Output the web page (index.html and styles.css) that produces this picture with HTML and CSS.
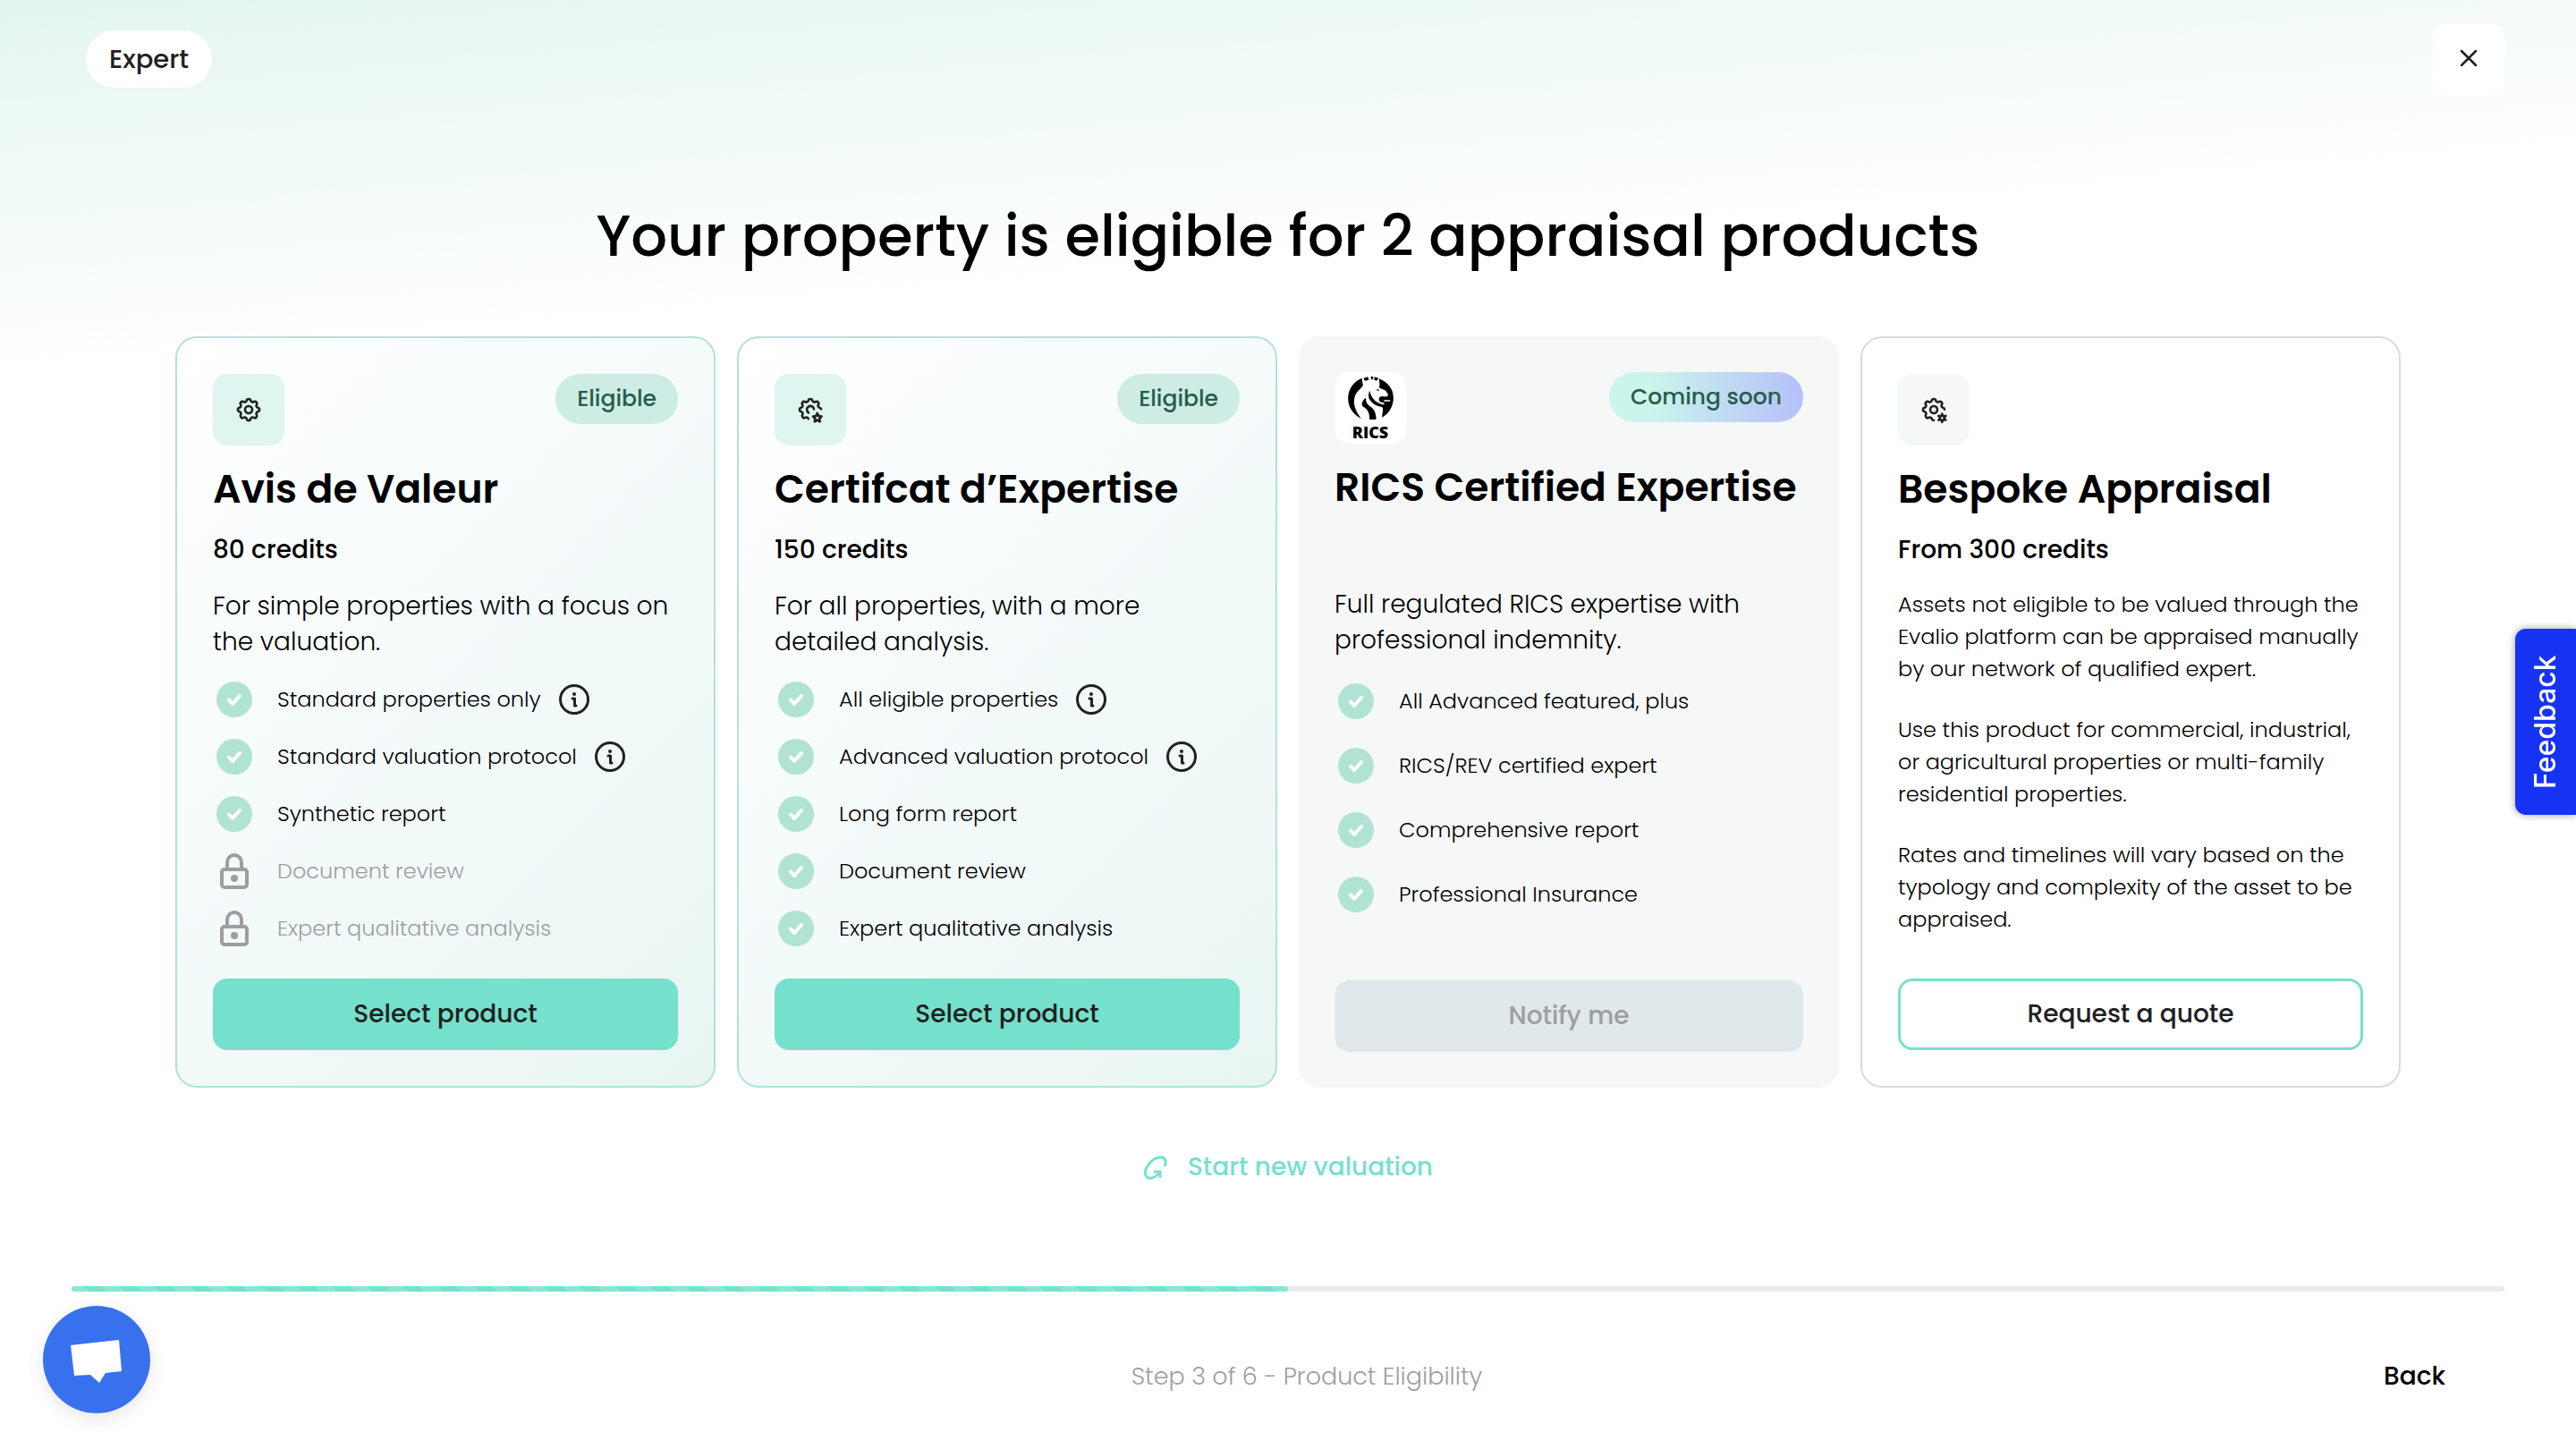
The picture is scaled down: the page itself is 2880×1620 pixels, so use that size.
FILE: index.html
```html
<!DOCTYPE html>
<html lang="en">
<head>
    <meta charset="UTF-8">
    <meta name="viewport" content="width=device-width, initial-scale=1.0">
    <title>Product Eligibility</title>
    <link rel="stylesheet" href="styles.css">
</head>
<body>
    <!-- Shared icons -->
    <svg class="sprite" width="0" height="0" aria-hidden="true">
        <symbol id="check" viewBox="0 0 40 40">
            <circle cx="20" cy="20" r="20" fill="#b1e3d5"/>
            <path d="M14 20.500l4 4.500 8-9" fill="none" stroke="#fff" stroke-width="4" stroke-linecap="round" stroke-linejoin="round"/>
        </symbol>
        <symbol id="lock" viewBox="0 0 40 40">
            <path d="M12 17V10a8 8 0 0 1 16 0v7" fill="none" stroke="#9e9e9e" stroke-width="4"/>
            <rect x="6" y="18" width="28" height="20" rx="3" fill="none" stroke="#9e9e9e" stroke-width="4"/>
            <circle cx="20" cy="28" r="4" fill="#9e9e9e"/>
        </symbol>
        <symbol id="info" viewBox="0 0 34 34">
            <circle cx="17" cy="17" r="15.500" fill="none" stroke="#212121" stroke-width="3"/>
            <circle cx="17" cy="11" r="2" fill="#212121"/>
            <path d="M15 16h2.500v8h1.500" fill="none" stroke="#212121" stroke-width="3" stroke-linecap="round" stroke-linejoin="round"/>
        </symbol>
    </svg>

    <header class="topbar">
        <span class="mode">Expert</span>
        <button class="close" aria-label="Close">
            <svg width="20" height="20" viewBox="0 0 20 20"><path d="M2 2l16 16M18 2L2 18" stroke="#212121" stroke-width="2.500" stroke-linecap="round"/></svg>
        </button>
    </header>

    <main>
        <h1>Your property is eligible for 2 appraisal products</h1>

        <div class="cards">
            <section class="card eligible">
                <div class="card-top">
                    <span class="icon">
                        <svg width="32" height="32" viewBox="0 0 24 24"><path d="M10.300 4.300c.4-1.750 3-1.750 3.400 0a1.700 1.700 0 0 0 2.600 1.100c1.500-.95 3.300.85 2.400 2.400a1.700 1.700 0 0 0 1 2.500c1.800.5 1.800 3 0 3.400a1.700 1.700 0 0 0-1 2.600c.9 1.500-.9 3.300-2.400 2.400a1.700 1.700 0 0 0-2.600 1c-.4 1.800-3 1.800-3.400 0a1.700 1.700 0 0 0-2.600-1c-1.500.9-3.300-.9-2.400-2.400a1.700 1.700 0 0 0-1-2.600c-1.800-.4-1.800-2.900 0-3.400a1.700 1.700 0 0 0 1-2.500c-.9-1.550.9-3.350 2.400-2.400a1.700 1.700 0 0 0 2.600-1.100z"/><circle cx="12" cy="12" r="3"/></svg>
                    </span>
                    <span class="badge">Eligible</span>
                </div>
                <h2>Avis de Valeur</h2>
                <p class="price">80 credits</p>
                <p class="intro">For simple properties with a focus on the valuation.</p>
                <ul>
                    <li><svg class="mark"><use href="#check"/></svg>Standard properties only <svg class="info"><use href="#info"/></svg></li>
                    <li><svg class="mark"><use href="#check"/></svg>Standard valuation protocol <svg class="info"><use href="#info"/></svg></li>
                    <li><svg class="mark"><use href="#check"/></svg>Synthetic report</li>
                    <li class="locked"><svg class="mark"><use href="#lock"/></svg>Document review</li>
                    <li class="locked"><svg class="mark"><use href="#lock"/></svg>Expert qualitative analysis</li>
                </ul>
                <button class="btn">Select product</button>
            </section>

            <section class="card eligible">
                <div class="card-top">
                    <span class="icon">
                        <svg width="32" height="32" viewBox="0 0 24 24"><path d="M10.300 19.700a1.700 1.700 0 0 0-2.600-1c-1.500.9-3.300-.9-2.400-2.400a1.700 1.700 0 0 0-1-2.600c-1.800-.4-1.800-2.900 0-3.400a1.700 1.700 0 0 0 1-2.500c-.9-1.550.9-3.350 2.400-2.400a1.700 1.700 0 0 0 2.600-1.100c.4-1.750 3-1.750 3.400 0a1.700 1.700 0 0 0 2.600 1.100c1.500-.95 3.300.85 2.400 2.400a1.700 1.700 0 0 0 1 2.500c.7.200 1.100.6 1.300 1.200M15 11.500a3 3 0 1 0-4.500 3"/><path d="M17.800 20.800l-2.200 1.200.4-2.500-1.800-1.800 2.500-.4 1.100-2.300 1.100 2.300 2.500.4-1.800 1.800.4 2.500z"/></svg>
                    </span>
                    <span class="badge">Eligible</span>
                </div>
                <h2>Certifcat d’Expertise</h2>
                <p class="price">150 credits</p>
                <p class="intro">For all properties, with a more detailed analysis.</p>
                <ul>
                    <li><svg class="mark"><use href="#check"/></svg>All eligible properties <svg class="info"><use href="#info"/></svg></li>
                    <li><svg class="mark"><use href="#check"/></svg>Advanced valuation protocol <svg class="info"><use href="#info"/></svg></li>
                    <li><svg class="mark"><use href="#check"/></svg>Long form report</li>
                    <li><svg class="mark"><use href="#check"/></svg>Document review</li>
                    <li><svg class="mark"><use href="#check"/></svg>Expert qualitative analysis</li>
                </ul>
                <button class="btn">Select product</button>
            </section>

            <section class="card soon">
                <div class="card-top">
                    <span class="icon rics">
                        <!-- Lion head emblem -->
                        <svg width="51" height="49" viewBox="0 0 152 147">
                            <path d="M46 8C18 20 0 45 0 76c0 29 16 54 44 68-20-26-30-52-20-78 6-16 20-22 26-34z"/>
                            <path d="M52 8l14-4 4 10-14 3zM76 3h8v10h-6zM88 4l14 4-6 9-8-3z"/>
                            <path d="M104 10c30 12 48 36 48 64 0 30-16 54-38 66 0-22 8-28-2-36-16-2-28-8-40-24-6-12-2-24 0-30 4 16 12 34 32 42 8 4 16 8 18 2l-4-4c-12 0-16-6-14-16 6-8 18-2 28-4l2-8-8-12c-6-4-18-6-22-10 4-10 0-20 0-30z"/>
                            <path d="M46 96c2-10 6-18 14-22-2 16 6 24 18 32 12 10 16 24 16 41-8 1-16 1-22-1 0-22-6-34-22-42zM92 44l13 3-3 5z"/>
                            <path class="jaw" d="M122 84h18"/>
                        </svg>
                        <b>RICS</b>
                    </span>
                    <span class="badge">Coming soon</span>
                </div>
                <h2>RICS Certified Expertise</h2>
                <p class="price"></p>
                <p class="intro">Full regulated RICS expertise with professional indemnity.</p>
                <ul>
                    <li><svg class="mark"><use href="#check"/></svg>All Advanced featured, plus</li>
                    <li><svg class="mark"><use href="#check"/></svg>RICS/REV certified expert</li>
                    <li><svg class="mark"><use href="#check"/></svg>Comprehensive report</li>
                    <li><svg class="mark"><use href="#check"/></svg>Professional Insurance</li>
                </ul>
                <button class="btn" disabled>Notify me</button>
            </section>

            <section class="card bespoke">
                <div class="card-top">
                    <span class="icon">
                        <svg width="32" height="32" viewBox="0 0 24 24"><path d="M12 20.900c-.8 0-1.500-.4-1.700-1.200a1.700 1.700 0 0 0-2.600-1c-1.500.9-3.300-.9-2.400-2.400a1.700 1.700 0 0 0-1-2.600c-1.800-.4-1.800-2.900 0-3.400a1.700 1.700 0 0 0 1-2.500c-.9-1.550.9-3.350 2.400-2.400a1.700 1.700 0 0 0 2.600-1.100c.4-1.750 3-1.750 3.400 0a1.700 1.700 0 0 0 2.600 1.100c1.500-.95 3.300.85 2.400 2.400a1.700 1.700 0 0 0 1 2.500c.8.200 1.200.8 1.300 1.500"/><circle cx="12" cy="12" r="3"/><circle cx="19" cy="19" r="2"/><path d="M19 15.500v1.500M19 21v1.500M22 17.250l-1.300.75M17.300 20l-1.300.75M16 17.250l1.300.75M20.700 20l1.300.75"/></svg>
                    </span>
                </div>
                <h2>Bespoke Appraisal</h2>
                <p class="price">From 300 credits</p>
                <div class="details">
                    <p>Assets not eligible to be valued through the Evalio platform can be appraised manually by our network of qualified expert.</p>
                    <p>Use this product for commercial, industrial, or agricultural properties or multi-family residential properties.</p>
                    <p>Rates and timelines will vary based on the typology and complexity of the asset to be appraised.</p>
                </div>
                <button class="btn">Request a quote</button>
            </section>
        </div>

        <a class="restart" href="#">
            <svg width="28" height="28" viewBox="0 0 28 28"><path d="M24 13C27 7 24 2 18 3 9 4 0 17 3 23c2 5 10 4 15-3M12 19h7v7"/></svg>
            Start new valuation
        </a>
    </main>

    <footer>
        <div class="progress"><div class="bar" style="width: 50%"></div></div>
        <div class="steps">
            <span class="step">Step 3 of 6 - Product Eligibility</span>
            <button class="back">Back</button>
        </div>
    </footer>

    <button class="feedback">Feedback</button>
    <button class="chat" aria-label="Open chat">
        <svg width="58" height="48" viewBox="0 0 58 48"><path d="M0 6L54 0l3 35-18 2-7 11-10-9-18 1z" fill="#fff"/></svg>
    </button>
</body>
</html>
```
FILE: styles.css
```css
* {
    box-sizing: border-box;
}
body {
    margin: 0;
    min-height: 100vh;
    display: flex;
    flex-direction: column;
    font-family: Poppins, Inter, sans-serif;
    font-size: 24px;
    color: #000;
    background: linear-gradient(175deg, #e3f5f0 0, #fff 420px) #fff;
}
h1, h2, p, ul {
    margin: 0;
    padding: 0;
}
button {
    font: inherit;
    border: none;
    cursor: pointer;
}
.sprite {
    position: absolute;
}
.topbar {
    display: flex;
    justify-content: space-between;
    align-items: center;
    padding: 26px 80px 0 96px;
}
.mode {
    padding: 0 26px;
    line-height: 64px;
    font-size: 29px;
    font-weight: 500;
    color: #212121;
    background: #fff;
    border-radius: 32px;
}
.close {
    width: 80px;
    height: 80px;
    padding: 0;
    background: #fff;
    border-radius: 16px;
}
main {
    flex: 1;
    padding: 0 196px;
    text-align: center;
}
h1 {
    margin-top: 110px;
    font-size: 64px;
    line-height: 96px;
    font-weight: 500;
}
.cards {
    display: grid;
    grid-template-columns: repeat(4, 1fr);
    gap: 24px;
    margin-top: 64px;
    text-align: left;
}
.card {
    display: flex;
    flex-direction: column;
    min-height: 840px;
    padding: 40px;
    border: 2px solid #dadada;
    border-radius: 24px;
}
.eligible {
    border-color: #b1e3d5;
    background: linear-gradient(135deg, #fff 0%, #f6fbfc 40%, #e8f5f3 100%);
}
.soon {
    border: none;
    background: #f6f8f7;
}
.card-top {
    display: flex;
    justify-content: space-between;
    align-items: flex-start;
}
.icon {
    width: 80px;
    height: 80px;
    display: flex;
    justify-content: center;
    align-items: center;
    border-radius: 16px;
    background: #f6f8f7;
}
.icon svg {
    fill: none;
    stroke: #212121;
    stroke-width: 2;
    stroke-linecap: round;
    stroke-linejoin: round;
}
.eligible .icon {
    background: #dff5ef;
}
.icon.rics {
    flex-direction: column;
    gap: 4px;
    background: #fff;
}
.rics svg {
    fill: #000;
    stroke: none;
}
.rics .jaw {
    stroke: #fff;
    stroke-width: 4;
}
.rics b {
    font: 800 18px/20px "Open Sans", sans-serif;
}
.badge {
    padding: 0 24px;
    line-height: 56px;
    font-size: 25px;
    font-weight: 500;
    color: #265c4b;
    background: #cdece3;
    border-radius: 28px;
}
.soon .badge {
    background: linear-gradient(90deg, #cbf5ec 20%, #b6c0f9 100%);
}
h2 {
    margin-top: 16px;
    font-size: 44px;
    line-height: 66px;
    font-weight: 600;
    white-space: nowrap;
}
.price {
    min-height: 42px;
    margin-top: 14px;
    font-size: 28px;
    line-height: 42px;
    font-weight: 500;
}
.intro {
    margin-top: 22px;
    font-size: 28px;
    line-height: 40px;
    font-weight: 300;
}
ul {
    display: flex;
    flex-direction: column;
    gap: 24px;
    margin: 24px 0;
    list-style: none;
}
li {
    display: flex;
    align-items: center;
    line-height: 40px;
    font-weight: 300;
}
.soon ul {
    gap: 32px;
    margin-top: 28px;
}
.locked {
    color: #9e9e9e;
}
.mark {
    width: 40px;
    height: 40px;
    margin: 0 28px 0 4px;
}
.info {
    width: 34px;
    height: 34px;
    margin-left: 20px;
}
.details {
    display: flex;
    flex-direction: column;
    gap: 32px;
    margin: 22px 0;
    line-height: 36px;
    font-weight: 300;
}
.btn {
    width: 100%;
    height: 80px;
    margin-top: auto;
    font-size: 28px;
    font-weight: 500;
    color: #212121;
    background: #75e1cc;
    border-radius: 16px;
}
.btn:disabled {
    color: #9e9e9e;
    background: #dfe8eb;
}
.bespoke .btn {
    background: #fff;
    border: 3px solid #75e1cc;
}
.restart {
    display: inline-flex;
    align-items: center;
    gap: 22px;
    margin-top: 68px;
    font-size: 28px;
    line-height: 42px;
    font-weight: 500;
    color: #75e1cc;
    text-decoration: none;
}
.restart svg {
    fill: none;
    stroke: #75e1cc;
    stroke-width: 3;
}
footer {
    padding: 0 80px 60px;
}
.progress {
    height: 6px;
    background: #e9ebf0;
    border-radius: 3px;
}
.bar {
    height: 6px;
    border-radius: 3px;
    background: repeating-linear-gradient(45deg, #8ae6d4 0 14px, #75e1cc 14px 28px);
}
.steps {
    display: grid;
    grid-template-columns: 1fr auto 1fr;
    margin-top: 74px;
    line-height: 42px;
}
.step {
    grid-column: 2;
    margin-left: 42px;
    font-size: 27px;
    font-weight: 300;
    color: #9e9e9e;
}
.back {
    justify-self: end;
    margin-right: 66px;
    padding: 0;
    font-size: 28px;
    font-weight: 500;
    background: none;
}
.feedback {
    position: fixed;
    top: 703px;
    right: 0;
    width: 68px;
    height: 208px;
    font: 500 32px Inter, sans-serif;
    color: #fff;
    background: #1633f5;
    border-radius: 0 12px 12px 0;
    box-shadow: 0 0 8px rgba(0, 0, 0, 0.4);
    writing-mode: vertical-rl;
    transform: rotate(180deg);
}
.chat {
    position: fixed;
    left: 48px;
    bottom: 40px;
    width: 120px;
    height: 120px;
    display: flex;
    justify-content: center;
    align-items: center;
    padding: 4px 0 0;
    background: #3871ed;
    border-radius: 50%;
    box-shadow: 0 6px 20px rgba(0, 0, 0, 0.1);
}
```
